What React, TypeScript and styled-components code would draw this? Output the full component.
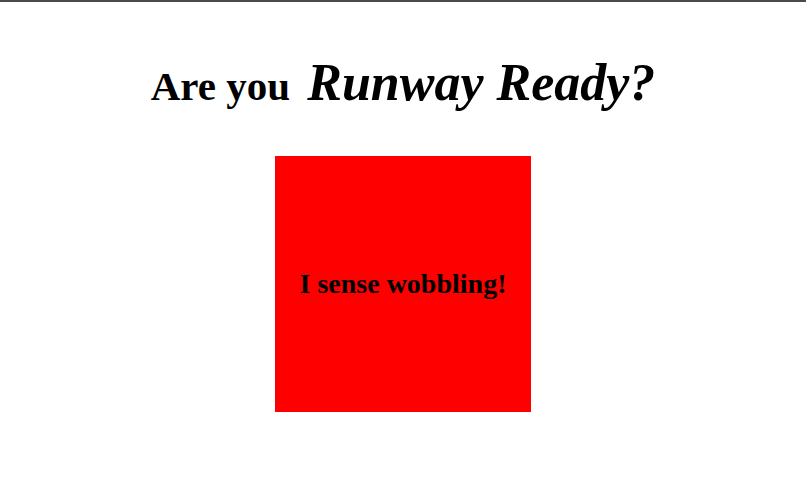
import React from "react";
import styled, { createGlobalStyle } from "styled-components";

const GlobalStyle = createGlobalStyle`
    html, body {
        margin: 0;
        padding: 0;
        background: #ffffff;
        font-family: "Liberation Serif", "Times New Roman", serif;
    }
`

const App = () => {
    return (
        <>
            <GlobalStyle />
            <Page>
                <Title>
                    Are you <Accent>Runway Ready?</Accent>
                </Title>
                <Box>
                    <BoxText>I sense wobbling!</BoxText>
                </Box>
            </Page>
        </>
    );
}

export default App;


const Page = styled.div`
    border-top: 2px solid #4a4a4a;
    height: 501px;
    display: flex;
    flex-direction: column;
    align-items: center;
`

const Title = styled.h1`
    margin: 51px 0 0;
    font-size: 41px;
    font-weight: bold;
    line-height: 60px;
    color: #000;
    white-space: nowrap;
`

const Accent = styled.span`
    margin-left: 7px;
    font-size: 52px;
    font-style: italic;
`

const Box = styled.div`
    margin-top: 40px;
    width: 256px;
    height: 256px;
    background: #ff0000;
    display: flex;
    align-items: center;
    justify-content: center;
`

const BoxText = styled.p`
    margin: 0;
    font-size: 28px;
    font-weight: bold;
    color: #000;
`
